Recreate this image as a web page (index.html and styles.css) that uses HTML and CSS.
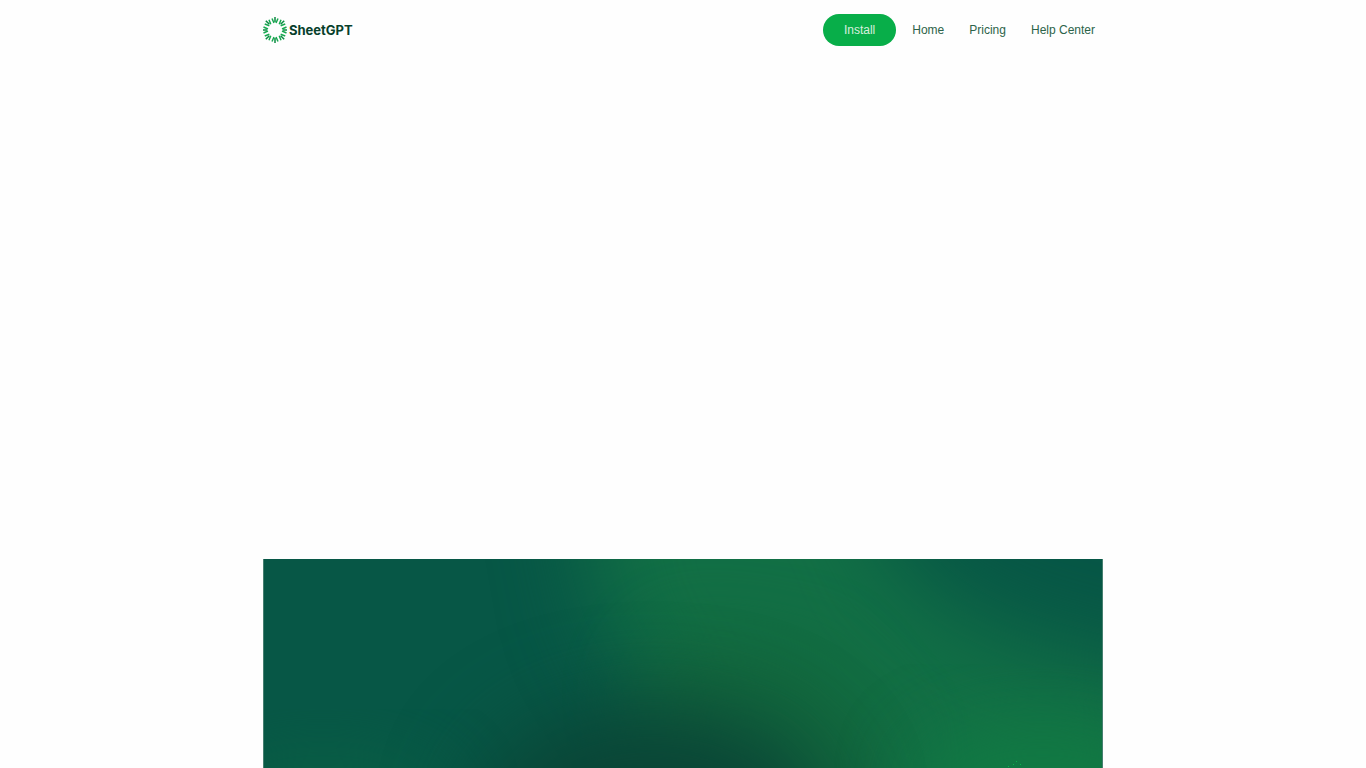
FILE: index.html
```html
<!DOCTYPE html>
<html lang="en">

<head>
    <meta charset="utf-8">
    <meta name="viewport" content="width=device-width, initial-scale=1">
    <title>SheetGPT</title>
    <link rel="stylesheet" href="styles.css">
</head>

<body>
    <header class="header">
        <a class="logo" href="#">
            <svg class="logo-mark" viewBox="0 0 48 52" aria-hidden="true">
                <defs>
                    <!-- one sprig: a dark stalk with a lighter leaf on each side -->
                    <g id="sprig" fill="none" stroke-width="3">
                        <path d="M24 0v10" stroke="#0b8a42" />
                        <path d="M18 3l4 9M30 3l-4 9" stroke="#18a850" />
                    </g>
                </defs>
                <use href="#sprig" />
                <use href="#sprig" transform="rotate(45 24 26)" />
                <use href="#sprig" transform="rotate(90 24 26)" />
                <use href="#sprig" transform="rotate(135 24 26)" />
                <use href="#sprig" transform="rotate(180 24 26)" />
                <use href="#sprig" transform="rotate(225 24 26)" />
                <use href="#sprig" transform="rotate(270 24 26)" />
                <use href="#sprig" transform="rotate(315 24 26)" />
            </svg>
            <span>SheetGPT</span>
        </a>
        <nav class="nav">
            <a class="install" href="#">Install</a>
            <a href="#">Home</a>
            <a href="#">Pricing</a>
            <a href="#">Help Center</a>
        </nav>
    </header>

    <main class="main">
        <section class="intro"></section>
        <section class="banner">
            <svg class="banner-art" viewBox="0 0 840 209" preserveAspectRatio="xMidYMin slice" aria-hidden="true">
                <defs>
                    <filter id="soft" x="-50%" y="-50%" width="200%" height="200%" color-interpolation-filters="sRGB">
                        <feGaussianBlur stdDeviation="36" />
                    </filter>
                    <filter id="softer" x="-80%" y="-80%" width="260%" height="260%" color-interpolation-filters="sRGB">
                        <feGaussianBlur stdDeviation="44" />
                    </filter>
                </defs>
                <rect width="840" height="209" fill="#075746" />
                <ellipse cx="60" cy="250" rx="120" ry="50" fill="#0a6044" filter="url(#soft)" />
                <path d="M310-110H590L640 15L740 75L920 120V320H440L400 150L340 60Z" fill="#126f45" filter="url(#softer)" />
                <path d="M420 70L560 90L640 190L600 320H420L370 120Z" fill="#13653a" opacity="0.7" filter="url(#soft)" />
                <ellipse cx="780" cy="225" rx="130" ry="60" fill="#117a43" filter="url(#soft)" />
                <ellipse cx="390" cy="270" rx="180" ry="125" fill="#0a4536" filter="url(#softer)" />
                <g fill="#0ab54c">
                    <rect x="753" y="202" width="1" height="1" />
                    <rect x="750" y="205" width="1" height="1" />
                    <rect x="757" y="205" width="1" height="1" />
                    <rect x="745" y="207" width="1" height="1" />
                </g>
            </svg>
        </section>
    </main>
</body>

</html>
```
FILE: styles.css
```css
* {
    box-sizing: border-box;
}

body {
    display: flex;
    flex-direction: column;
    min-height: 100vh;
    max-width: 840px;
    margin: 0 auto;
    background-color: #fefefe;
    font-family: "Liberation Sans", Arial, sans-serif;
    font-size: 12px;
}

a {
    color: #2c6349;
    text-decoration: none;
}

.header {
    display: flex;
    justify-content: space-between;
    align-items: center;
    height: 59px;
}

.logo {
    display: flex;
    align-items: center;
    gap: 2px;
    color: #073f2c;
    font-family: Inter, "Open Sans", sans-serif;
    font-size: 13px;
    font-weight: 700;
}

.logo-mark {
    width: 24px;
    height: 26px;
}

.nav {
    display: flex;
    align-items: center;
    gap: 25px;
    padding-right: 8px;
}

.nav .install {
    margin-right: -9px;
    padding: 0 21px;
    border-radius: 16px;
    background-color: #08ae49;
    color: #d9efdf;
    line-height: 32px;
}

.main {
    display: flex;
    flex: 1;
    flex-direction: column;
}

.intro {
    height: 500px;
}

.banner {
    position: relative;
    flex: 1;
    min-height: 209px;
    overflow: hidden;
    border: 1px solid #467f70;
    border-width: 0 1px;
    background-color: #075746;
}

.banner-art {
    position: absolute;
    top: 0;
    left: 0;
    width: 100%;
    height: 100%;
}
```
